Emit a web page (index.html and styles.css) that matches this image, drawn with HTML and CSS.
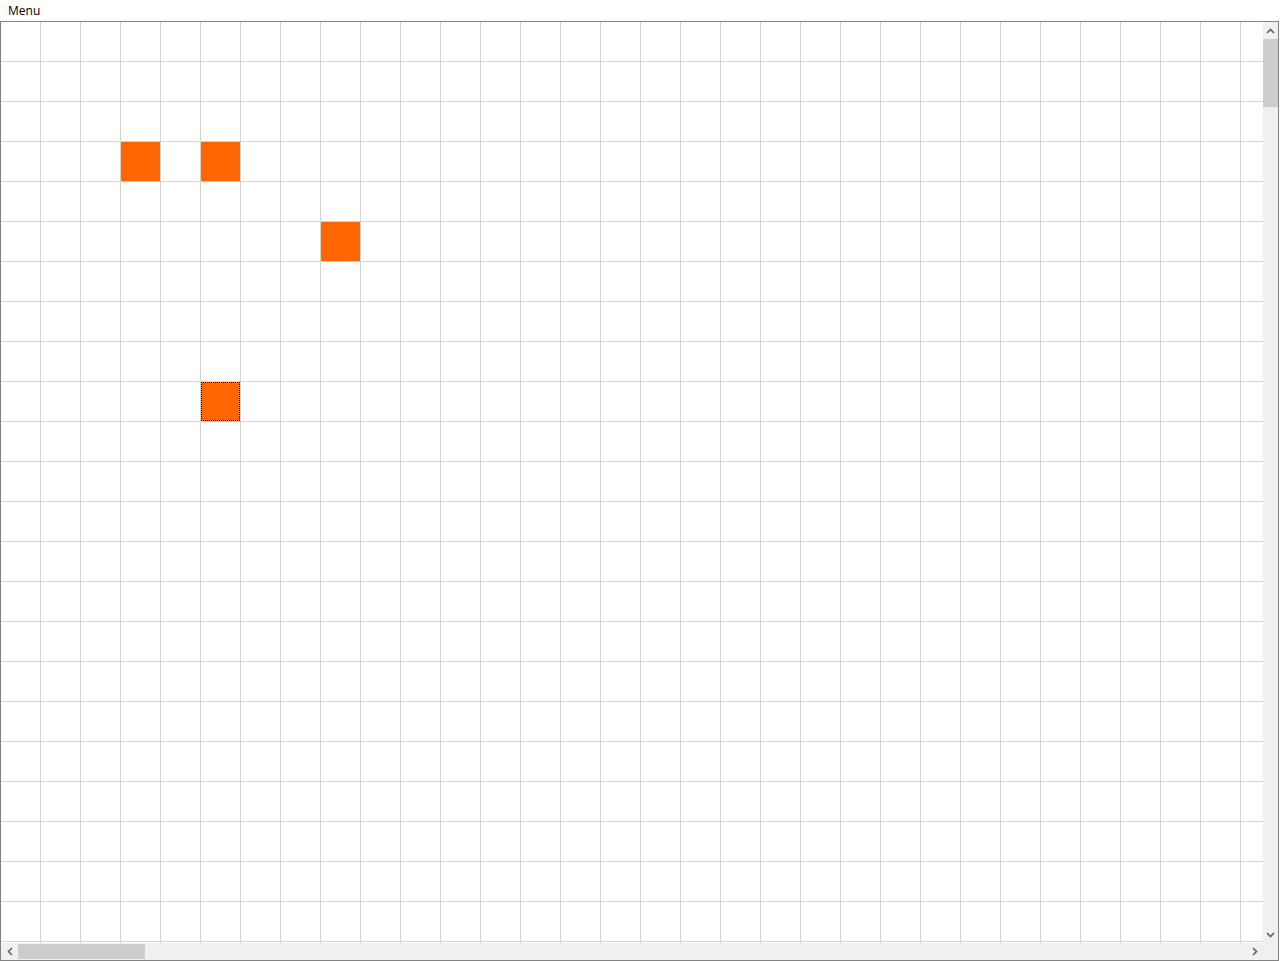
FILE: index.html
```html
<!DOCTYPE html>
<html>
<head>
<meta charset="utf-8">
<title>Grid</title>
<link rel="stylesheet" href="styles.css">
</head>
<body>
<div class="menubar"><span class="menu-item">Menu</span></div>
<div class="frame">
  <div class="main-row">
    <div class="viewport">
      <div class="grid">
        <div class="cell on" style="grid-column:4;grid-row:4"></div>
        <div class="cell on" style="grid-column:6;grid-row:4"></div>
        <div class="cell on" style="grid-column:9;grid-row:6"></div>
        <div class="cell on focus" style="grid-column:6;grid-row:10"></div>
      </div>
    </div>
    <div class="vbar">
      <div class="sbtn">
        <svg width="9" height="6" viewBox="0 0 9 6"><path d="M1 5 L4.5 1.5 L8 5" fill="none" stroke="#606060" stroke-width="1.6"/></svg>
      </div>
      <div class="vtrack"><div class="vthumb"></div></div>
      <div class="sbtn">
        <svg width="9" height="6" viewBox="0 0 9 6"><path d="M1 1 L4.5 4.5 L8 1" fill="none" stroke="#606060" stroke-width="1.6"/></svg>
      </div>
    </div>
  </div>
  <div class="bottom-row">
    <div class="hbar">
      <div class="sbtn">
        <svg width="6" height="9" viewBox="0 0 6 9"><path d="M5 1 L1.5 4.5 L5 8" fill="none" stroke="#606060" stroke-width="1.6"/></svg>
      </div>
      <div class="htrack"><div class="hthumb"></div></div>
      <div class="sbtn">
        <svg width="6" height="9" viewBox="0 0 6 9"><path d="M1 1 L4.5 4.5 L1 8" fill="none" stroke="#606060" stroke-width="1.6"/></svg>
      </div>
    </div>
    <div class="corner"></div>
  </div>
</div>
</body>
</html>
```
FILE: styles.css
```css
html, body {
  margin: 0;
  padding: 0;
  background: #ffffff;
  width: 1280px;
  height: 961px;
  overflow: hidden;
}
body {
  font-family: "Noto Sans", "Open Sans", "DejaVu Sans", sans-serif;
  font-size: 12px;
  color: #000;
}
.menubar {
  height: 21px;
  display: flex;
  align-items: center;
  padding-left: 8px;
  box-sizing: border-box;
}
.menu-item {
  line-height: 21px;
  font-family: "Open Sans", "Noto Sans", sans-serif;
  font-size: 12px;
}
.frame {
  width: 1279px;
  height: 940px;
  border: 1px solid #828282;
  box-sizing: border-box;
  display: flex;
  flex-direction: column;
}
.main-row {
  display: flex;
  height: 921px;
}
.viewport {
  width: 1262px;
  height: 921px;
  overflow: hidden;
  background: #fff;
}
.grid {
  display: grid;
  grid-template-columns: repeat(40, 40px);
  grid-template-rows: repeat(30, 40px);
  width: 1600px;
  height: 1200px;
  background-image:
    linear-gradient(to right, transparent 39px, #d3d3d3 39px),
    linear-gradient(to bottom, transparent 39px, #d3d3d3 39px);
  background-size: 40px 40px;
}
.cell {
  width: 39px;
  height: 39px;
}
.cell.on {
  background: #ff6600;
}
.cell.focus {
  outline: 1px dotted #000;
  outline-offset: -1px;
}
.vbar {
  width: 15px;
  display: flex;
  flex-direction: column;
  background: #f0f0f0;
}
.vbar .sbtn {
  height: 17px;
  display: flex;
  align-items: center;
  justify-content: center;
}
.vtrack {
  flex: 1;
}
.vthumb {
  height: 68px;
  background: #cdcdcd;
}
.bottom-row {
  display: flex;
  height: 17px;
}
.hbar {
  width: 1262px;
  display: flex;
  background: #f0f0f0;
}
.hbar .sbtn {
  width: 17px;
  display: flex;
  align-items: center;
  justify-content: center;
}
.htrack {
  flex: 1;
  display: flex;
  align-items: center;
}
.hthumb {
  width: 127px;
  height: 15px;
  background: #cdcdcd;
}
.corner {
  flex: 1;
  background: #f0f0f0;
}
```
